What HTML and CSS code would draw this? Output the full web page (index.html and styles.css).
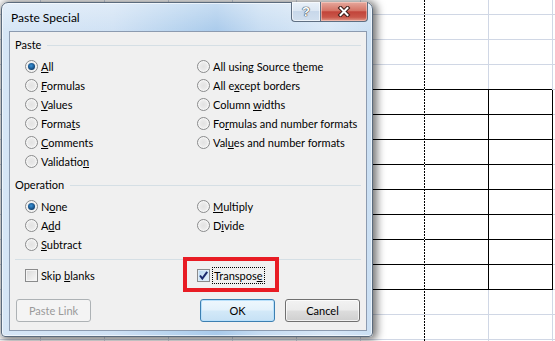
FILE: index.html
```html
<!DOCTYPE html>
<html>
<head>
<meta charset="utf-8">
<link rel="stylesheet" href="styles.css">
</head>
<body>
<div class="sheet">
  <div class="tbl">
    <i></i><i></i><i></i><i></i><i></i><i></i><i></i><i></i>
    <i></i><i></i><i></i><i></i><i></i><i></i><i></i><i></i>
    <i></i><i></i><i></i><i></i><i></i><i></i><i></i><i></i>
  </div>
  <div class="marquee"></div>
</div>

<div class="dialog">
  <div class="titlebar">
    <span class="title">Paste Special</span>
    <div class="capbtns">
      <div class="cbtn help"><span>?</span></div>
      <div class="cbtn close">
        <svg width="14" height="11" viewBox="0 0 14 11">
          <path d="M3.5 2 L10.5 9 M10.5 2 L3.5 9" stroke="#3a1c18" stroke-width="4" stroke-linecap="square" fill="none"/>
          <path d="M3.5 2 L10.5 9 M10.5 2 L3.5 9" stroke="#ffffff" stroke-width="2" stroke-linecap="square" fill="none"/>
        </svg>
      </div>
    </div>
  </div>
  <div class="client">
    <div class="ghead"><span>Paste</span><i class="rule"></i></div>
    <div class="opts">
      <label class="opt"><span class="radio on"></span><span><u>A</u>ll</span></label>
      <label class="opt"><span class="radio"></span><span>All using Source t<u>h</u>eme</span></label>
      <label class="opt"><span class="radio"></span><span><u>F</u>ormulas</span></label>
      <label class="opt"><span class="radio"></span><span>All e<u>x</u>cept borders</span></label>
      <label class="opt"><span class="radio"></span><span><u>V</u>alues</span></label>
      <label class="opt"><span class="radio"></span><span>Column <u>w</u>idths</span></label>
      <label class="opt"><span class="radio"></span><span>Forma<u>t</u>s</span></label>
      <label class="opt"><span class="radio"></span><span>Fo<u>r</u>mulas and number formats</span></label>
      <label class="opt"><span class="radio"></span><span><u>C</u>omments</span></label>
      <label class="opt"><span class="radio"></span><span>Val<u>u</u>es and number formats</span></label>
      <label class="opt"><span class="radio"></span><span>Validatio<u>n</u></span></label>
      <span></span>
    </div>
    <div class="ghead op"><span>Operation</span><i class="rule"></i></div>
    <div class="opts">
      <label class="opt"><span class="radio on"></span><span>N<u>o</u>ne</span></label>
      <label class="opt"><span class="radio"></span><span><u>M</u>ultiply</span></label>
      <label class="opt"><span class="radio"></span><span>A<u>d</u>d</span></label>
      <label class="opt"><span class="radio"></span><span>D<u>i</u>vide</span></label>
      <label class="opt"><span class="radio"></span><span><u>S</u>ubtract</span></label>
      <span></span>
    </div>
    <div class="sep"></div>
    <div class="checks">
      <label class="opt"><span class="check"></span><span>Skip <u>b</u>lanks</span></label>
      <label class="opt"><span class="check on"><svg width="11" height="11" viewBox="0 0 11 11"><path d="M2 5.5 L4.3 8.6 L9.2 1.8" stroke="#1a2b6e" stroke-width="2" fill="none"/></svg></span><span class="focus">Transpos<u>e</u></span></label>
      <div class="redbox"></div>
    </div>
    <div class="buttons">
      <div class="btn disabled">Paste Link</div>
      <div class="btn default">OK</div>
      <div class="btn">Cancel</div>
    </div>
  </div>
</div>
</body>
</html>
```

FILE: styles.css
```css
html, body {
  margin: 0;
  padding: 0;
}
body {
  width: 555px;
  height: 341px;
  overflow: hidden;
  position: relative;
  background: #fff;
  font-family: Lato, "Open Sans", sans-serif;
  font-size: 11px;
  color: #000;
}

/* spreadsheet */
.sheet {
  display: grid;
  grid-template-columns: 40px repeat(8, 64px);
  grid-template-rows: 14px repeat(13, 25px) 2px;
  width: 555px;
  height: 341px;
  overflow: hidden;
  background-image:
    linear-gradient(to right, #d0d7e5 0 1px, transparent 1px),
    linear-gradient(to bottom, #d0d7e5 0 1px, transparent 1px);
  background-size: 64px 100%, 100% 25px;
  background-position: 40px 0, 0 14px;
}
.tbl {
  grid-column: 7 / span 3;
  grid-row: 5 / span 8;
  display: grid;
  grid-template-columns: repeat(3, 64px);
  grid-template-rows: repeat(8, 25px);
  background: #fff;
  box-shadow: 1px 1px 0 #000;
}
.tbl i {
  box-sizing: border-box;
  border-top: 1px solid #000;
  border-left: 1px solid #000;
}
.marquee {
  grid-column: 8;
  grid-row: 1 / -1;
  width: 1px;
  background: repeating-linear-gradient(to bottom, #000 0 2px, #fff 2px 3px);
}

/* dialog */
.dialog {
  position: absolute;
  left: 1px;
  top: 2px;
  width: 372px;
  height: 335px;
  box-sizing: border-box;
  border: 1px solid #5b6b7d;
  border-radius: 7px 7px 4px 4px;
  padding: 0 5px 5px 7px;
  display: flex;
  flex-direction: column;
  background:
    linear-gradient(to bottom, rgba(255,255,255,0.35), rgba(255,255,255,0) 30px),
    linear-gradient(to right, #d6e6f6 0%, #cfe1f4 30%, #b0cfed 52%, #a9caeb 58%, #c6dcf2 70%, #d8e7f6 88%, #cadff3 100%);
  box-shadow: inset 0 0 0 1px rgba(255,255,255,0.6), 2px 1px 9px 2px rgba(0,0,0,0.55);
}
.titlebar {
  height: 28px;
  display: flex;
  align-items: flex-start;
  flex: none;
}
.title {
  padding-left: 2px;
  margin-top: 7px;
  font-size: 12px;
  line-height: 16px;
}
.capbtns {
  margin-left: auto;
  margin-right: -1px;
  margin-top: -1px;
  display: flex;
}
.cbtn {
  height: 20px;
  box-sizing: border-box;
  border: 1px solid #5f6f82;
  border-top: none;
  display: flex;
  align-items: center;
  justify-content: center;
}
.help {
  width: 29px;
  border-right: none;
  border-radius: 0 0 0 4px;
  background: linear-gradient(to bottom, #e9f1f9 0%, #dce7f3 45%, #c8d8ea 50%, #d1dfee 100%);
  box-shadow: inset 0 0 0 1px rgba(255,255,255,0.6);
}
.help span {
  font-family: "Liberation Sans", sans-serif;
  font-weight: bold;
  font-size: 13px;
  line-height: 13px;
  color: #fff;
  text-shadow: 0 0 1px #34404f, 0 0 1px #34404f, 0 0 1px #34404f;
}
.close {
  width: 48px;
  border-radius: 0 0 4px 0;
  background: linear-gradient(to bottom, #e5a89d 0%, #d57567 45%, #c2443a 52%, #c9574a 80%, #e19b8c 100%);
  box-shadow: inset 0 0 0 1px rgba(255,220,210,0.5);
}
.close svg { display: block; }

.client {
  flex: none;
  height: 300px;
  box-sizing: border-box;
  border: 1px solid #8c9bb0;
  background: #f0f0f0;
  display: flex;
  flex-direction: column;
}
.ghead {
  margin-top: 5px;
  height: 16px;
  padding: 0 5px;
  display: flex;
  align-items: center;
  gap: 6px;
  line-height: 16px;
}
.ghead.op { margin-top: 6px; }
.rule {
  flex: 1;
  height: 1px;
  background: #d5dfe5;
}
.opts {
  margin-top: 4px;
  padding-left: 15px;
  display: grid;
  grid-template-columns: 172px 1fr;
  grid-auto-rows: 19px;
}
.opt {
  display: flex;
  align-items: center;
  gap: 3px;
  line-height: 15px;
  white-space: nowrap;
}
u { text-underline-offset: 1px; }
.radio {
  flex: none;
  width: 13px;
  height: 13px;
  box-sizing: border-box;
  border-radius: 50%;
  border: 1px solid #8a8b8c;
  background: radial-gradient(circle at 50% 50%, #e2e2e2 0, #e9e9e9 40%, #fbfbfb 100%);
  box-shadow: inset 0 0 0 1px #f6f6f6;
  position: relative;
}
.radio.on::after {
  content: "";
  position: absolute;
  left: 2px;
  top: 2px;
  width: 7px;
  height: 7px;
  border-radius: 50%;
  background: radial-gradient(circle at 45% 40%, #3a94d8 0, #1e5f99 45%, #12406d 70%, #6fb4e3 100%);
}
.sep {
  margin: 5px 5px 0;
  height: 1px;
  background: #d5dfe5;
}
.checks {
  margin-top: 7px;
  padding-left: 15px;
  height: 17px;
  display: grid;
  grid-template-columns: 172px 1fr;
  position: relative;
}
.check {
  flex: none;
  width: 13px;
  height: 13px;
  box-sizing: border-box;
  border: 1px solid #8a8b8c;
  background: linear-gradient(135deg, #d8d8d8, #f9f9f9);
  box-shadow: inset 0 0 0 1px #f4f4f4;
  display: flex;
  align-items: center;
  justify-content: center;
}
.check.on {
  background: linear-gradient(135deg, #b5d6f0, #e8f4fc);
  box-shadow: inset 0 0 0 1px #dcecf9;
}
.check svg { display: block; }
.focus {
  border: 1px dotted #000;
  padding: 0 1px;
  margin-left: -1px;
}
.redbox {
  position: absolute;
  left: 173px;
  top: -10px;
  width: 96px;
  height: 35px;
  box-sizing: border-box;
  border: 4px solid #e81c24;
}
.buttons {
  margin-top: 15px;
  padding: 0 6px;
  display: flex;
  gap: 10px;
}
.btn {
  width: 75px;
  height: 23px;
  box-sizing: border-box;
  border: 1px solid #707070;
  border-radius: 3px;
  background: linear-gradient(to bottom, #f2f2f2 0%, #ebebeb 48%, #dddddd 52%, #cfcfcf 100%);
  box-shadow: inset 0 0 0 1px rgba(255,255,255,0.7);
  display: flex;
  align-items: center;
  justify-content: center;
  line-height: 15px;
}
.btn.disabled {
  border-color: #adb2b5;
  background: #f4f4f4;
  color: #9a9a9a;
  box-shadow: none;
}
.btn.default {
  margin-left: auto;
  border-color: #3c7fb1;
  background: linear-gradient(to bottom, #eef7fd 0%, #e3f1fb 48%, #d3e9f8 52%, #c6e1f5 100%);
  box-shadow: inset 0 0 0 1px #b8e0fb;
}
```
